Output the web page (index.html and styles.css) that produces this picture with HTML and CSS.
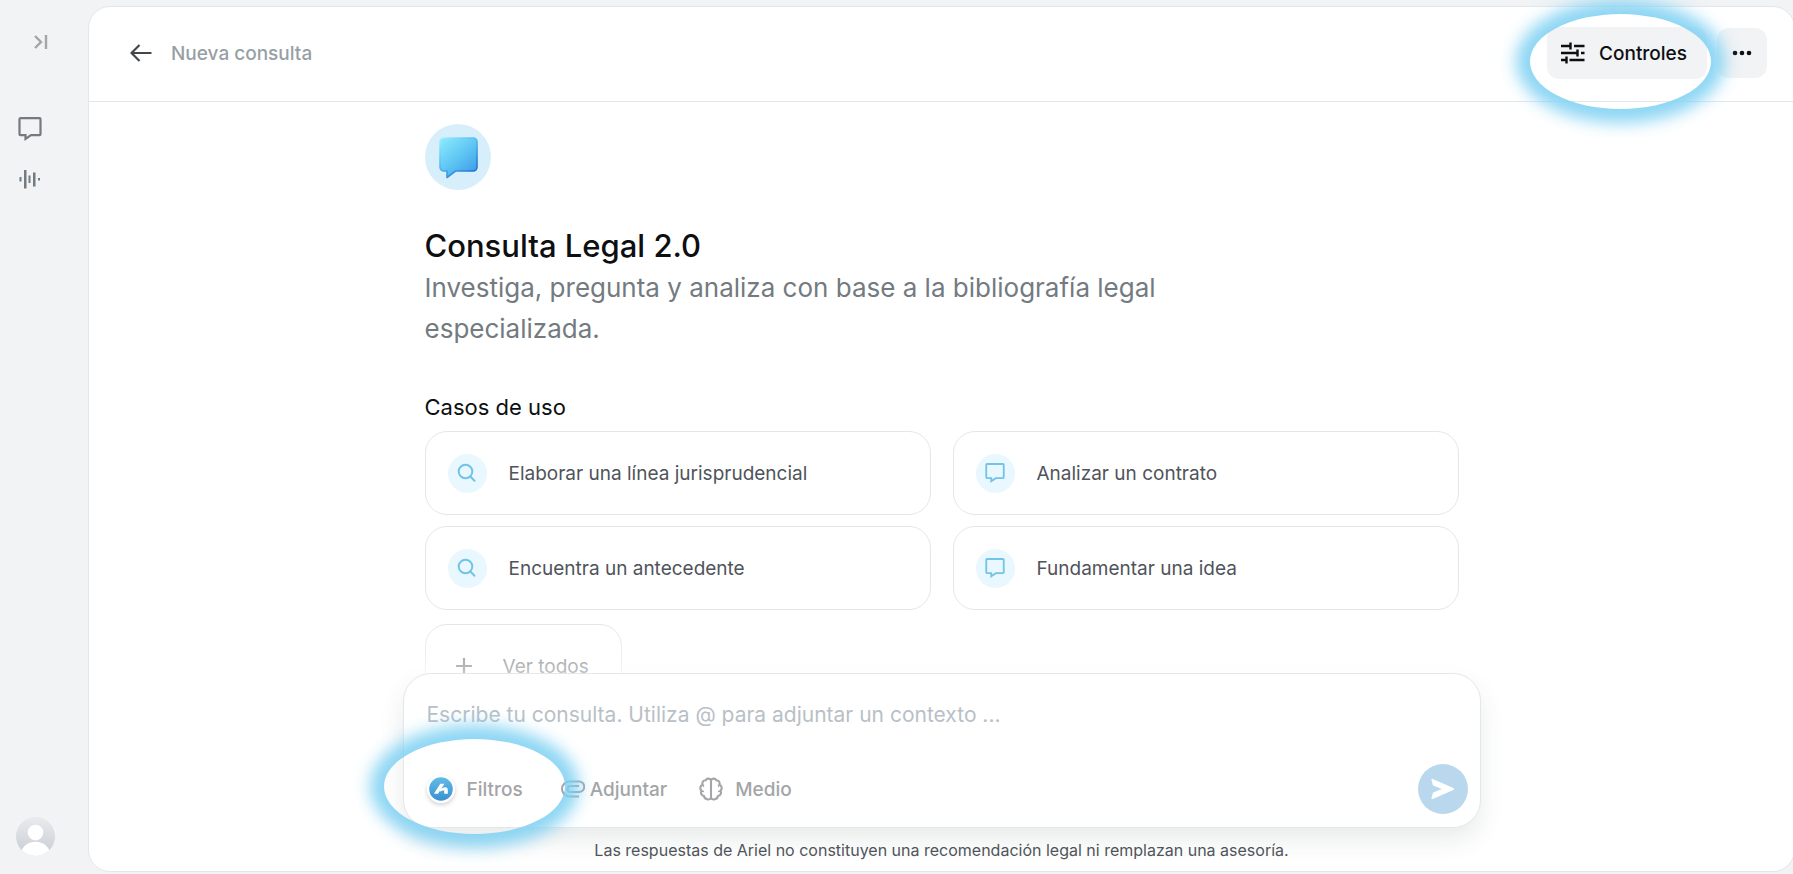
FILE: index.html
```html
<!DOCTYPE html>
<html lang="es">
<head>
    <meta charset="UTF-8">
    <meta name="viewport" content="width=device-width, initial-scale=1.0">
    <title>Consulta Legal 2.0 - Ariel</title>
    <link rel="stylesheet" href="styles.css">
</head>
<body>
    <!-- Shared icons -->
    <svg class="icon-defs" width="0" height="0" aria-hidden="true">
        <symbol id="icon-chat" viewBox="0 0 24 24">
            <path d="M2.5 1.200h19a1 1 0 0 1 1 1v15a1 1 0 0 1-1 1H13l-5.5 3.700v-3.700h-5a1 1 0 0 1-1-1v-15a1 1 0 0 1 1-1z" fill="none" stroke="currentColor" stroke-width="2.200"/>
        </symbol>
        <symbol id="icon-search" viewBox="0 0 20 20">
            <circle cx="8.500" cy="8.500" r="6.800" fill="none" stroke="currentColor" stroke-width="2"/>
            <path d="M13.300 13.500l4.200 4.200" fill="none" stroke="currentColor" stroke-width="2" stroke-linecap="round"/>
        </symbol>
    </svg>

    <aside class="sidebar">
        <button type="button" class="icon-button toggle-button" aria-label="Expandir menú">
            <svg width="14" height="16" viewBox="0 0 14 16" fill="none" stroke="currentColor" stroke-width="2.400">
                <path d="M1 2l6 6-6 6M12 1v14"/>
            </svg>
        </button>
        <nav class="sidebar-nav">
            <a href="#" class="nav-link" aria-label="Consultas">
                <svg width="24" height="24"><use href="#icon-chat"/></svg>
            </a>
            <a href="#" class="nav-link" aria-label="Audio">
                <svg width="24" height="24" viewBox="0 0 24 24" fill="currentColor">
                    <path d="M1.500 10h2v4.500h-2zM6 3h2.500v18.500H6zM10.500 8.500h2v7.500h-2zM15 5.500h2.500v14H15zM20 11h2v2.500h-2z"/>
                </svg>
            </a>
        </nav>
        <button type="button" class="icon-button avatar" aria-label="Perfil">
            <svg width="39" height="39" viewBox="0 0 40 40">
                <defs>
                    <linearGradient id="avatarBg" x1="0" y1="0" x2="0" y2="1">
                        <stop offset="0" stop-color="#e9ebee"/>
                        <stop offset="1" stop-color="#c8ccd3"/>
                    </linearGradient>
                    <clipPath id="avatarClip"><circle cx="20" cy="20" r="20"/></clipPath>
                </defs>
                <g clip-path="url(#avatarClip)">
                    <rect width="40" height="40" fill="url(#avatarBg)"/>
                    <circle cx="20" cy="16" r="8" fill="#fff"/>
                    <ellipse cx="20" cy="38" rx="15" ry="12.500" fill="#fff"/>
                </g>
            </svg>
        </button>
    </aside>

    <main class="panel">
        <header class="topbar">
            <a href="#" class="back-link" aria-label="Volver">
                <svg width="22" height="18" viewBox="0 0 22 18" fill="none" stroke="currentColor" stroke-width="2.200">
                    <path d="M21.500 9H2M9.500 1L1.500 9l8 8"/>
                </svg>
            </a>
            <span class="topbar-title">Nueva consulta</span>
            <div class="topbar-actions">
                <div class="highlight-anchor">
                    <button type="button" class="controls-button">
                        <svg width="24" height="22" viewBox="0 0 24 22" fill="none" stroke="currentColor" stroke-width="2.400">
                            <path d="M0 4h10M9.500 .500v7M13 4h10.500M0 11h16.500M16.500 7.500v7M20 11h3.500M0 18h5.500M5.500 14.500v7M8.500 18h15"/>
                        </svg>
                        Controles
                    </button>
                    <span class="highlight highlight-controls"></span>
                </div>
                <button type="button" class="more-button" aria-label="Más opciones">
                    <svg width="20" height="6" viewBox="0 0 20 6" fill="currentColor">
                        <circle cx="3" cy="3" r="2.300"/><circle cx="10" cy="3" r="2.300"/><circle cx="17" cy="3" r="2.300"/>
                    </svg>
                </button>
            </div>
        </header>

        <section class="content">
            <div class="content-inner">
                <div class="hero-icon">
                    <svg width="42" height="44" viewBox="0 0 42 44">
                        <defs>
                            <linearGradient id="bubbleFill" x1="0" y1="0" x2="0.800" y2="1">
                                <stop offset="0" stop-color="#8eeafd"/>
                                <stop offset="0.500" stop-color="#62c9f4"/>
                                <stop offset="1" stop-color="#3d9de8"/>
                            </linearGradient>
                            <linearGradient id="bubbleEdge" x1="0" y1="0" x2="0.700" y2="1">
                                <stop offset="0" stop-color="#a5f2fd"/>
                                <stop offset="0.500" stop-color="#4fb8f0"/>
                                <stop offset="1" stop-color="#236fd0"/>
                            </linearGradient>
                        </defs>
                        <path d="M7 3h29a4 4 0 0 1 4 4v25a4 4 0 0 1-4 4H18.500L10 42.500V36H7a4 4 0 0 1-4-4v-25A4 4 0 0 1 7 3z" fill="url(#bubbleFill)" stroke="url(#bubbleEdge)" stroke-width="1.600" stroke-linejoin="round"/>
                    </svg>
                </div>
                <h1>Consulta Legal 2.0</h1>
                <p class="subtitle">Investiga, pregunta y analiza con base a la bibliografía legal especializada.</p>

                <h2>Casos de uso</h2>
                <div class="use-cases">
                    <button type="button" class="case-card">
                        <span class="case-icon"><svg width="20" height="20"><use href="#icon-search"/></svg></span>
                        Elaborar una línea jurisprudencial
                    </button>
                    <button type="button" class="case-card">
                        <span class="case-icon"><svg width="20" height="20"><use href="#icon-chat"/></svg></span>
                        Analizar un contrato
                    </button>
                    <button type="button" class="case-card">
                        <span class="case-icon"><svg width="20" height="20"><use href="#icon-search"/></svg></span>
                        Encuentra un antecedente
                    </button>
                    <button type="button" class="case-card">
                        <span class="case-icon"><svg width="20" height="20"><use href="#icon-chat"/></svg></span>
                        Fundamentar una idea
                    </button>
                </div>
                <button type="button" class="case-card see-all">
                    <svg width="16" height="16" viewBox="0 0 16 16" fill="none" stroke="currentColor" stroke-width="2.200">
                        <path d="M8 0v16M0 8h16"/>
                    </svg>
                    Ver todos
                </button>
            </div>
        </section>

        <!-- Message composer -->
        <footer class="dock">
            <form class="composer">
                <input type="text" class="composer-input" aria-label="Consulta" placeholder="Escribe tu consulta. Utiliza @ para adjuntar un contexto ...">
                <div class="composer-tools">
                    <div class="highlight-anchor">
                        <button type="button" class="tool-button filters-button">
                            <svg class="filters-logo" width="28" height="28" viewBox="0 0 28 28">
                                <defs>
                                    <linearGradient id="logoFill" x1="0" y1="0" x2="0" y2="1">
                                        <stop offset="0" stop-color="#62bce6"/>
                                        <stop offset="1" stop-color="#3a90d0"/>
                                    </linearGradient>
                                </defs>
                                <circle cx="14" cy="14" r="14" fill="#fff"/>
                                <circle cx="14" cy="14" r="11.800" fill="url(#logoFill)"/>
                                <path d="M6.800 18.800L13.300 8.800h4.200L11 18.800zM12.800 14.300l4-1.800c2.500-.800 4 .200 4 2.500v3.800h-3.600v-3.200c-1.300-.400-2.600.200-3.800 1.200z" fill="#fff"/>
                            </svg>
                            Filtros
                        </button>
                        <span class="highlight highlight-filters"></span>
                    </div>
                    <button type="button" class="tool-button attach-button">
                        <svg width="24" height="18" viewBox="0 0 24 18" fill="none" stroke="currentColor" stroke-width="2">
                            <path d="M18 16.500H8.500a7.500 7.500 0 0 1 0-15H18a5 5 0 0 1 0 10.500H9.500a3 3 0 0 1 0-6H18"/>
                        </svg>
                        Adjuntar
                    </button>
                    <button type="button" class="tool-button">
                        <svg width="24" height="24" viewBox="0 0 24 24" fill="none" stroke="currentColor" stroke-width="2.100" stroke-linejoin="round">
                            <path d="M12 3.500v17.500M12 3.500C11.300 1.300 8 .700 6.700 3.300 4.200 3.200 2.800 5.500 3.600 7.700 1 8.700.600 12 2.500 13.700 1.200 16 2.500 18.600 5 19c.500 3.500 5.500 4.700 7 2 1.500 2.700 6.500 1.500 7-2 2.500-.400 3.800-3 2.500-5.300 1.900-1.700 1.500-5-1.100-6 .800-2.200-.600-4.500-3.100-4.400C16 .700 12.700 1.300 12 3.500z"/>
                            <path d="M3.600 7.700c.200.900.700 1.400 1.500 1.800M2.500 13.700c.800.700 1.500.900 2.500.800M20.400 7.700c-.200.900-.700 1.400-1.500 1.800M21.500 13.700c-.800.700-1.500.900-2.500.800" stroke-width="1.500"/>
                        </svg>
                        Medio
                    </button>
                    <button type="submit" class="send-button" aria-label="Enviar">
                        <svg width="24" height="22" viewBox="0 0 24 22" fill="#fff">
                            <path d="M1.800.900L22.300 9.900a1.200 1.200 0 0 1 0 2.200L1.800 21.100C.800 21.500.200 20.800.500 20L2 14.500 11 11 2 7.500.500 2C.200 1.200.800.500 1.800.900z"/>
                        </svg>
                    </button>
                </div>
            </form>
            <p class="disclaimer">Las respuestas de Ariel no constituyen una recomendación legal ni remplazan una asesoría.</p>
        </footer>
    </main>
</body>
</html>
```

FILE: styles.css
```css
/* Color Palette */
:root {
    --color-page: #f1f3f5;
    --color-border: #e4e7ea;
    --color-text: #0d0f10;
    --color-text-mid: #4f545a;
    --color-text-soft: #737b81;
    --color-muted: #a3a5a8;
    --color-blue-soft: #e9f7fe;
    --color-blue: #73c3e8;
    --color-glow: rgba(125, 208, 242, 0.88);
}

* {
    box-sizing: border-box;
}

body {
    margin: 0;
    height: 100vh;
    display: flex;
    font-family: Inter, sans-serif;
    background-color: var(--color-page);
    color: var(--color-text);
    overflow: hidden;
}

button {
    font-family: inherit;
    border: none;
    background: none;
    padding: 0;
    cursor: pointer;
}

svg {
    display: block;
    flex-shrink: 0;
}

.icon-defs {
    position: absolute;
}

/* Sidebar */
.sidebar {
    width: 88px;
    flex-shrink: 0;
    display: flex;
    flex-direction: column;
    align-items: flex-start;
    padding: 34px 16px 18px;
}
.toggle-button {
    margin-left: 18px;
    color: #a3a5a7;
}
.sidebar-nav {
    display: flex;
    flex-direction: column;
    gap: 26px;
    margin-top: 67px;
    padding-left: 2px;
}
.nav-link {
    color: #737a80;
}
.avatar {
    margin-top: auto;
}

/* Main panel, its right border runs off the window edge */
.panel {
    flex: 1;
    min-width: 0;
    display: flex;
    flex-direction: column;
    margin: 6px -2px 2px 0;
    background-color: white;
    border: 1px solid var(--color-border);
    border-radius: 22px;
}

.topbar {
    display: flex;
    align-items: center;
    height: 95px;
    flex-shrink: 0;
    padding: 0 27px 2px 41px;
    border-bottom: 1px solid var(--color-border);
}
.back-link {
    color: #42474c;
}
.topbar-title {
    margin-left: 19px;
    font-size: 19px;
    font-weight: 500;
    color: #979fa6;
}
.topbar-actions {
    display: flex;
    align-items: center;
    gap: 10px;
    margin-left: auto;
}
.controls-button {
    display: flex;
    align-items: center;
    gap: 14px;
    height: 52px;
    padding: 0 20px 0 14px;
    border-radius: 12px;
    background-color: var(--color-page);
    font-size: 19px;
    font-weight: 500;
    color: var(--color-text);
}
.more-button {
    display: flex;
    align-items: center;
    justify-content: center;
    width: 50px;
    height: 50px;
    border-radius: 12px;
    background-color: var(--color-page);
    color: var(--color-text);
}

/* Glowing rings over the highlighted controls */
.highlight-anchor {
    position: relative;
}
.highlight {
    position: absolute;
    width: 181px;
    height: 95px;
    border-radius: 50%;
    box-shadow: 0 0 16px 14px var(--color-glow);
    pointer-events: none;
    z-index: 2;
}
.highlight-controls {
    top: -13px;
    left: -17px;
}
.highlight-filters {
    top: -36px;
    left: -43px;
}

/* Content */
.content {
    position: relative;
    flex: 1;
    min-height: 0;
    overflow: hidden;
    padding: 22px 24px 0;
}
.content::after {
    content: "";
    position: absolute;
    left: 0;
    right: 0;
    bottom: 0;
    height: 48px;
    background: linear-gradient(rgba(255, 255, 255, 0), rgba(255, 255, 255, 0.5));
}
.content-inner {
    max-width: 1034px;
    margin: 0 auto;
}
.hero-icon {
    display: flex;
    align-items: center;
    justify-content: center;
    width: 66px;
    height: 66px;
    border-radius: 50%;
    background-color: #d7eefb;
}
h1 {
    margin: 35px 0 0;
    font-size: 31px;
    line-height: 42px;
    font-weight: 500;
}
.subtitle {
    max-width: 780px;
    margin: 0;
    font-size: 26px;
    line-height: 41px;
    color: var(--color-text-soft);
}
h2 {
    margin: 43px 0 9px;
    font-size: 22px;
    line-height: 30px;
    font-weight: 400;
}
.use-cases {
    display: grid;
    grid-template-columns: 1fr 1fr;
    gap: 11px 22px;
}
.case-card {
    display: flex;
    align-items: center;
    gap: 22px;
    height: 84px;
    padding: 0 22px;
    border: 1px solid var(--color-border);
    border-radius: 22px;
    background-color: white;
    font-size: 19px;
    text-align: left;
    color: var(--color-text-mid);
}
.case-icon {
    display: flex;
    align-items: center;
    justify-content: center;
    width: 39px;
    height: 39px;
    border-radius: 50%;
    background-color: var(--color-blue-soft);
    color: var(--color-blue);
}
.see-all {
    gap: 31px;
    margin-top: 14px;
    padding: 0 32px 0 30px;
    color: #7e8286;
}

/* Composer */
.dock {
    flex-shrink: 0;
    padding: 0 24px;
}
.composer {
    max-width: 1078px;
    margin: 0 auto;
    padding: 24px 12px 13px 23px;
    border: 1px solid var(--color-border);
    border-radius: 28px;
    background-color: white;
    box-shadow: 0 12px 24px rgba(40, 60, 60, 0.1);
}
.composer-input {
    display: block;
    width: 100%;
    height: 32px;
    padding: 0;
    border: none;
    outline: none;
    background: none;
    font-family: inherit;
    font-size: 21px;
    color: var(--color-text);
}
.composer-input::placeholder {
    color: #b9bfc6;
    opacity: 1;
}
.composer-tools {
    display: flex;
    align-items: center;
    margin-top: 34px;
}
.tool-button {
    display: flex;
    align-items: center;
    gap: 12px;
    font-size: 19px;
    font-weight: 500;
    color: var(--color-muted);
}
.filters-button {
    gap: 12px;
}
.filters-logo {
    border-radius: 50%;
    box-shadow: 0 2px 4px rgba(0, 0, 0, 0.18);
}
.attach-button {
    gap: 5px;
    margin: 0 32px 0 38px;
}
.send-button {
    display: flex;
    align-items: center;
    justify-content: center;
    width: 50px;
    height: 50px;
    margin-left: auto;
    border-radius: 50%;
    background-color: #b9d8ee;
}
.disclaimer {
    margin: 11px 0 10px;
    font-size: 16px;
    line-height: 22px;
    text-align: center;
    color: var(--color-text-mid);
}

@media (max-width: 768px) {
    .use-cases {
        grid-template-columns: 1fr;
    }
    .sidebar {
        width: 72px;
    }
}
```
